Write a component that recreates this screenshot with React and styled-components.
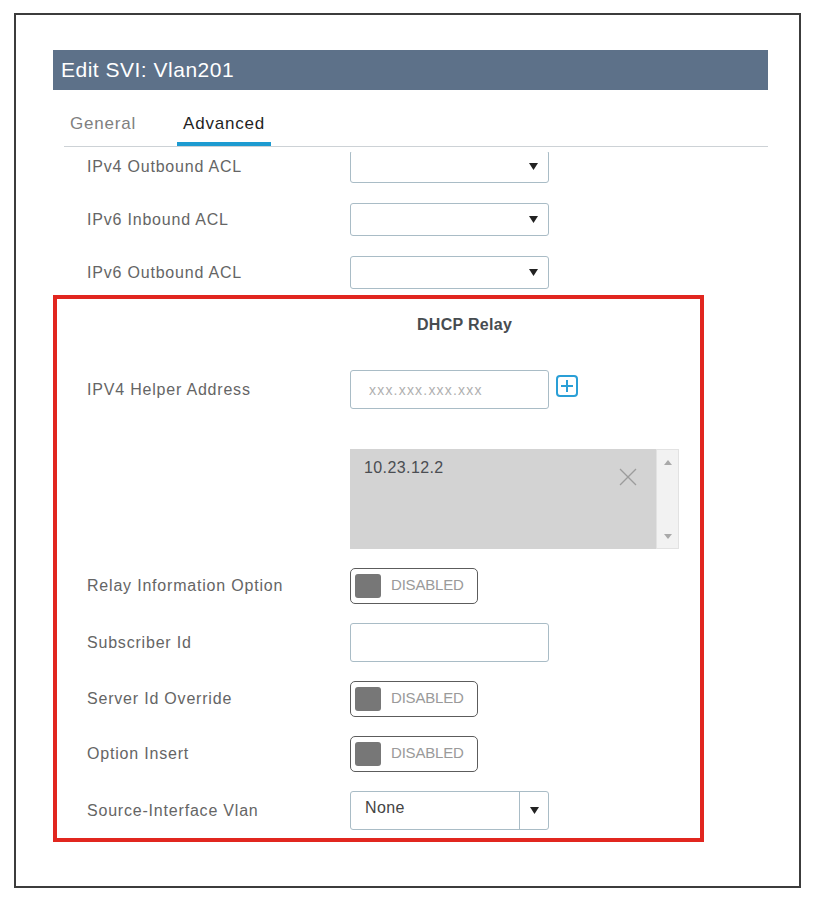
import React from "react";
import styled, { createGlobalStyle } from "styled-components";

const GlobalStyle = createGlobalStyle`
  body {
    margin: 0;
    background: #ffffff;
    font-family: "Liberation Sans", Arial, sans-serif;
  }
`;

const Frame = styled.div`
  box-sizing: border-box;
  margin: 13px 0 0 14px;
  width: 787px;
  height: 875px;
  border: 2px solid #3c3c3c;
  padding: 35px 0 0 37px;
`;

const Panel = styled.div`
  width: 715px;
`;

const Header = styled.div`
  height: 40px;
  background: #5d7189;
  color: #ffffff;
  font-size: 21px;
  letter-spacing: 0.5px;
  line-height: 40px;
  padding-left: 8px;
`;

const TabBar = styled.div`
  display: flex;
  gap: 35px;
  margin-left: 11px;
  border-bottom: 1px solid #cdd2d6;
`;

const Tab = styled.div`
  padding: 22px 6px 6px;
  font-size: 17px;
  line-height: 24px;
  letter-spacing: 0.8px;
  color: ${(p) => (p.$active ? "#1f1f1f" : "#808080")};
  border-bottom: 4px solid ${(p) => (p.$active ? "#1d9bd1" : "transparent")};
`;

const Viewport = styled.div`
  margin-top: 5px;
  overflow: hidden;
`;

const FormContent = styled.div`
  margin-top: -2px;
`;

const Rows = styled.div`
  display: flex;
  flex-direction: column;
  gap: 20px;
  padding-left: 34px;
`;

const Row = styled.div`
  display: grid;
  grid-template-columns: 263px auto;
  align-items: center;
  margin-top: ${(p) => p.$space || 0}px;
`;

const Label = styled.div`
  font-size: 16px;
  letter-spacing: 0.8px;
  color: #656565;
`;

const SelectBox = styled.div`
  box-sizing: border-box;
  width: 199px;
  height: ${(p) => p.$height || 33}px;
  border: 1px solid #a9bcc6;
  border-radius: 3px;
  background: #fff;
  display: flex;
  align-items: center;
`;

const SelectValue = styled.div`
  flex: 1;
  padding-left: 14px;
  font-size: 16px;
  letter-spacing: 0.4px;
  color: #444;
  margin-top: -5px;
`;

const CaretCell = styled.div`
  width: ${(p) => (p.$split ? "28px" : "auto")};
  height: 100%;
  display: flex;
  align-items: center;
  justify-content: center;
  padding-right: ${(p) => (p.$split ? 0 : 10)}px;
  border-left: ${(p) => (p.$split ? "1px solid #a9bcc6" : "none")};
  margin-left: auto;
`;

const DhcpSection = styled.div`
  box-sizing: border-box;
  width: 651px;
  margin-top: 6px;
  border: 4px solid #e1261f;
  padding: 14px 0 8px 30px;
  display: flex;
  flex-direction: column;
  gap: 19px;
`;

const SectionTitle = styled.div`
  margin-left: 330px;
  font-size: 16px;
  font-weight: 700;
  letter-spacing: 0.3px;
  line-height: 24px;
  color: #474c50;
`;

const ControlGroup = styled.div`
  display: flex;
  align-items: flex-start;
  gap: 7px;
`;

const TextInput = styled.input`
  box-sizing: border-box;
  width: 199px;
  height: 39px;
  border: 1px solid #a9bcc6;
  border-radius: 3px;
  padding: 0 18px;
  font-family: inherit;
  font-size: 14px;
  letter-spacing: 1.2px;
  color: #333;
  outline: none;

  &::placeholder {
    color: #b0b0b0;
  }
`;

const AddButton = styled.div`
  margin-top: 5px;
  width: 22px;
  height: 22px;
  display: flex;
`;

const ListBox = styled.div`
  display: flex;
  width: 329px;
  height: 100px;
`;

const ListArea = styled.div`
  flex: 1;
  background: #d3d3d3;
  padding: 7px 19px 0 14px;
`;

const ListItem = styled.div`
  display: flex;
  justify-content: space-between;
  align-items: flex-start;
`;

const ListText = styled.span`
  font-size: 16px;
  line-height: 24px;
  letter-spacing: 0.4px;
  color: #4a4d52;
`;

const RemoveIcon = styled.div`
  margin-top: 12px;
  display: flex;
`;

const ScrollTrack = styled.div`
  box-sizing: border-box;
  width: 23px;
  background: #f2f2f2;
  border: 1px solid #e2e2e2;
  display: flex;
  flex-direction: column;
  justify-content: space-between;
  align-items: center;
  padding: 10px 0 9px;
`;

const Toggle = styled.div`
  box-sizing: border-box;
  width: 128px;
  height: 36px;
  border: 1px solid #5c5c5c;
  border-radius: 5px;
  display: flex;
  align-items: center;
  gap: 10px;
  padding-left: 4px;
`;

const Knob = styled.div`
  width: 26px;
  height: 24px;
  border-radius: 3px;
  background: #777777;
`;

const ToggleText = styled.span`
  font-size: 15px;
  letter-spacing: -0.2px;
  color: #9a9a9a;
  margin-top: -3px;
`;

const Caret = () => (
  <svg width="9" height="7" viewBox="0 0 9 7">
    <polygon points="0,0 9,0 4.5,7" fill="#222" />
  </svg>
);

const ScrollArrow = ({ up }) => (
  <svg width="8" height="5" viewBox="0 0 8 5">
    <polygon points={up ? "0,5 8,5 4,0" : "0,0 8,0 4,5"} fill="#a9a9a9" />
  </svg>
);

const Select = ({ value, split, height }) => (
  <SelectBox $height={height}>
    {value && <SelectValue>{value}</SelectValue>}
    <CaretCell $split={split}>
      <Caret />
    </CaretCell>
  </SelectBox>
);

const DisabledToggle = () => (
  <Toggle>
    <Knob />
    <ToggleText>DISABLED</ToggleText>
  </Toggle>
);

const aclRows = ["IPv4 Outbound ACL", "IPv6 Inbound ACL", "IPv6 Outbound ACL"];

export default function App() {
  return (
    <>
      <GlobalStyle />
      <Frame>
        <Panel>
          <Header>Edit SVI: Vlan201</Header>
          <TabBar>
            <Tab>General</Tab>
            <Tab $active>Advanced</Tab>
          </TabBar>
          <Viewport>
            <FormContent>
              <Rows>
                {aclRows.map((label) => (
                  <Row key={label}>
                    <Label>{label}</Label>
                    <Select />
                  </Row>
                ))}
              </Rows>
              <DhcpSection>
                <SectionTitle>DHCP Relay</SectionTitle>
                <Row $space={14}>
                  <Label>IPV4 Helper Address</Label>
                  <ControlGroup>
                    <TextInput placeholder="xxx.xxx.xxx.xxx" readOnly />
                    <AddButton>
                      <svg width="22" height="22" viewBox="0 0 22 22">
                        <rect x="1" y="1" width="20" height="20" rx="3" fill="#fff" stroke="#2a9fd6" strokeWidth="2" />
                        <line x1="11" y1="5" x2="11" y2="17" stroke="#2a9fd6" strokeWidth="2" />
                        <line x1="5" y1="11" x2="17" y2="11" stroke="#2a9fd6" strokeWidth="2" />
                      </svg>
                    </AddButton>
                  </ControlGroup>
                </Row>
                <Row $space={21}>
                  <span />
                  <ListBox>
                    <ListArea>
                      <ListItem>
                        <ListText>10.23.12.2</ListText>
                        <RemoveIcon>
                          <svg width="18" height="18" viewBox="0 0 18 18">
                            <line x1="1" y1="1" x2="17" y2="17" stroke="#9c9c9c" strokeWidth="1.2" />
                            <line x1="17" y1="1" x2="1" y2="17" stroke="#9c9c9c" strokeWidth="1.2" />
                          </svg>
                        </RemoveIcon>
                      </ListItem>
                    </ListArea>
                    <ScrollTrack>
                      <ScrollArrow up />
                      <ScrollArrow />
                    </ScrollTrack>
                  </ListBox>
                </Row>
                <Row>
                  <Label>Relay Information Option</Label>
                  <DisabledToggle />
                </Row>
                <Row>
                  <Label>Subscriber Id</Label>
                  <TextInput readOnly />
                </Row>
                <Row>
                  <Label>Server Id Override</Label>
                  <DisabledToggle />
                </Row>
                <Row>
                  <Label>Option Insert</Label>
                  <DisabledToggle />
                </Row>
                <Row>
                  <Label>Source-Interface Vlan</Label>
                  <Select value="None" split height={39} />
                </Row>
              </DhcpSection>
            </FormContent>
          </Viewport>
        </Panel>
      </Frame>
    </>
  );
}
